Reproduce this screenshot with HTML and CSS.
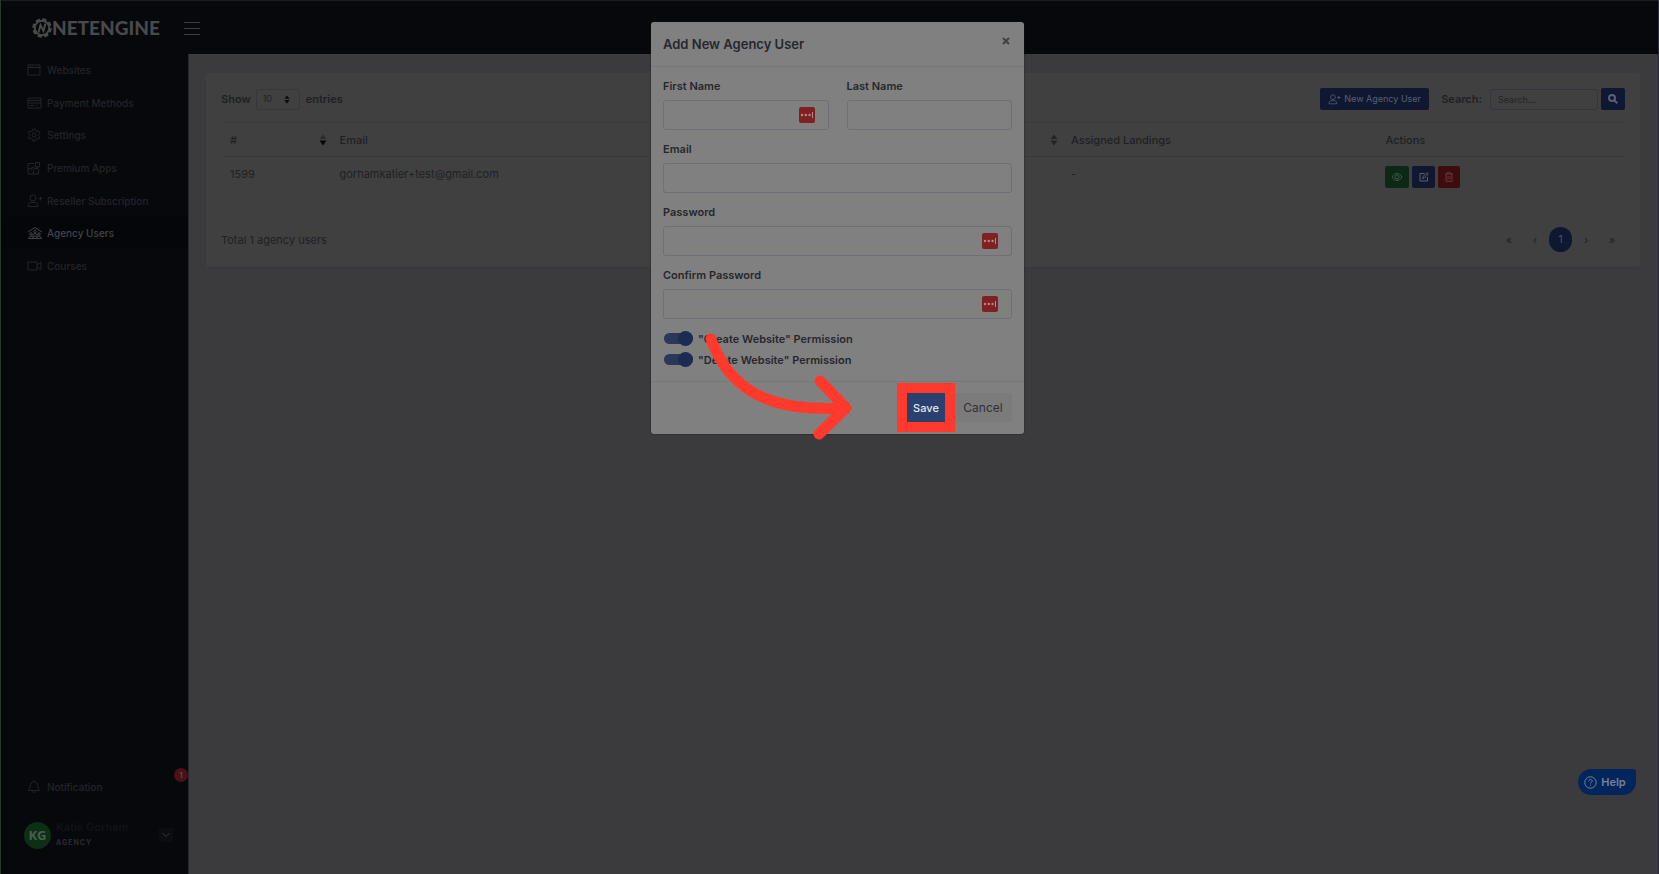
FILE: index.html
```html
<!DOCTYPE html>
<html lang="en">

<head>
    <meta charset="UTF-8">
    <meta name="viewport" content="width=device-width, initial-scale=1.0">
    <title>Agency Users</title>
    <link rel="stylesheet" href="styles.css">
</head>

<body>
    <svg class="sprite" width="0" height="0">
        <symbol id="user-plus" viewBox="0 0 16 14">
            <circle cx="6" cy="4" r="3" />
            <path d="M1 12.500c0-3 1.500-4 3-4h4c1.500 0 3 1 3 4zM13.500 2.500v4M11.500 4.500h4" />
        </symbol>
        <symbol id="sort" viewBox="0 0 8 12">
            <path class="up" d="M4 0.500L7.500 5H0.500z" />
            <path d="M4 11.500L7.500 6.500H0.500z" />
        </symbol>
        <symbol id="vault" viewBox="0 0 16 16">
            <circle cx="3" cy="8" r="1.200" />
            <circle cx="6.800" cy="8" r="1.200" />
            <circle cx="10.600" cy="8" r="1.200" />
            <rect x="13" y="5" width="1" height="6" />
        </symbol>
    </svg>

    <header class="topbar">
        <a class="brand" href="#">
            <svg width="20" height="20" viewBox="0 0 20 20">
                <circle cx="10" cy="10" r="7.200" fill="none" stroke="currentColor" stroke-width="2" />
                <circle cx="10" cy="10" r="8.500" fill="none" stroke="currentColor" stroke-width="2.600" stroke-dasharray="4.200 2.475" />
                <path d="M6.500 14.500L8.500 7L11.500 13L13.500 5.500" fill="none" stroke="currentColor" stroke-width="2" />
            </svg>
            <span>NETENGINE</span>
        </a>
        <button class="menu-toggle" type="button" aria-label="Toggle menu"><i></i><i></i><i></i></button>
    </header>

    <div class="layout">
        <aside class="sidebar">
            <nav class="nav">
                <a href="#">
                    <svg viewBox="0 0 16 14"><path d="M1 2h12v10H1zM1 4.500h12M3 3.200h1M5 3.200h1" /></svg>
                    Websites
                </a>
                <a href="#">
                    <svg viewBox="0 0 16 14"><path d="M1 2h13v10H1zM1 4.500h13M1 7h13M3 9.500h4M9 9.500h1" /></svg>
                    Payment Methods
                </a>
                <a href="#">
                    <svg viewBox="0 0 16 14"><path d="M5.800 1h2.400l.4 1.800 1.300.7 1.800-.6 1.200 2-1.400 1.300v1.600l1.400 1.300-1.200 2-1.800-.6-1.300.7-.4 1.800H5.800l-.4-1.800-1.300-.7-1.800.6-1.200-2 1.400-1.300V6.200L1.100 4.900l1.200-2 1.800.6 1.300-.7z" /><circle cx="7" cy="7" r="2" /></svg>
                    Settings
                </a>
                <a href="#">
                    <svg viewBox="0 0 16 14"><path d="M7 2.500H1v10.500h10.500V8M1 7.500h3.500a1.500 1.500 0 1 1 3 0h3M6.500 13v-2.500a1.500 1.500 0 1 0-2.500-1" /><path d="M8.500 1.500h4v4.500h-4zM10.500 6v2" /></svg>
                    Premium Apps
                </a>
                <a href="#">
                    <svg><use href="#user-plus" /></svg>
                    Reseller Subscription
                </a>
                <a class="active" href="#">
                    <svg viewBox="0 0 16 14"><path d="M1 6L8 1.500L15 6" /><circle cx="8" cy="5.500" r="1.300" /><circle cx="4" cy="8" r="1.200" /><circle cx="12" cy="8" r="1.200" /><path d="M6 10V8.500l2-1 2 1V10M1.500 12.500c0-3 5-3 5 0zM5.500 12.500c0-3 5-3 5 0zM9.500 12.500c0-3 5-3 5 0z" /></svg>
                    Agency Users
                </a>
                <a href="#">
                    <svg viewBox="0 0 16 14"><path d="M1 3h9v8H1zM10 6l4-2.500v7L10 8" /></svg>
                    Courses
                </a>
            </nav>

            <div class="sidebar-bottom">
                <a class="notification" href="#">
                    <svg viewBox="0 0 16 14"><path d="M1.500 10.500C4 8.500 2.500 5 4.200 3 5.500 1.300 8.500 1.300 9.800 3c1.700 2 .2 5.500 2.700 7.500zM5.500 11c.4 2 2.600 2 3 0M7 1.500V.5" /></svg>
                    Notification
                    <span class="badge">1</span>
                </a>
                <div class="account">
                    <span class="avatar">KG</span>
                    <div class="account-text">
                        <div class="account-name">Katie Gorham</div>
                        <div class="account-role">AGENCY</div>
                    </div>
                    <button class="account-toggle" type="button" aria-label="Account menu">
                        <svg width="8" height="6" viewBox="0 0 8 6"><path d="M0.500 1L4 4.500L7.500 1" /></svg>
                    </button>
                </div>
            </div>
        </aside>

        <main class="content">
            <section class="card">
                <div class="toolbar">
                    <label for="length">Show</label>
                    <span class="select-wrap">
                        <select id="length">
                            <option>10</option>
                            <option>25</option>
                        </select>
                        <svg width="8" height="9" viewBox="0 0 8 12"><use href="#sort" width="8" height="12" /></svg>
                    </span>
                    <label for="length">entries</label>
                    <button class="btn btn-new" type="button"><svg width="13" height="11"><use href="#user-plus" /></svg>New Agency User</button>
                    <label for="search">Search:</label>
                    <input id="search" type="text" placeholder="Search...">
                    <button class="btn btn-search" type="button" aria-label="Search">
                        <svg width="10" height="10" viewBox="0 0 10 10"><circle cx="4" cy="4" r="3" /><path d="M6.200 6.200L9.300 9.300" /></svg>
                    </button>
                </div>

                <table>
                    <thead>
                        <tr>
                            <th class="col-id sorted">#<svg class="sort" width="8" height="12"><use href="#sort" /></svg></th>
                            <th class="col-email">Email<svg class="sort" width="8" height="12"><use href="#sort" /></svg></th>
                            <th class="col-landings">Assigned Landings</th>
                            <th>Actions</th>
                        </tr>
                    </thead>
                    <tbody>
                        <tr>
                            <td>1599</td>
                            <td>gorhamkatier+test@gmail.com</td>
                            <td>-</td>
                            <td class="actions">
                                <button class="btn view" type="button" aria-label="View"><svg width="12" height="10" viewBox="0 0 12 10"><path d="M1 5c3-4.700 7-4.700 10 0-3 4.700-7 4.700-10 0z" /><circle cx="6" cy="5" r="2" /></svg></button>
                                <button class="btn edit" type="button" aria-label="Edit"><svg width="10" height="10" viewBox="0 0 10 10"><path d="M5.500 1.500H1v7.500h7.500V5M3.500 6.500l.5-2L8 .7l1.300 1.300L5.300 6z" /></svg></button>
                                <button class="btn delete" type="button" aria-label="Delete"><svg width="10" height="10" viewBox="0 0 10 10"><path d="M1 2h8M3.500 2V.7h3V2M2 2v7.300h6V2M4 4v3.500M6 4v3.500" /></svg></button>
                            </td>
                        </tr>
                    </tbody>
                </table>

                <div class="table-footer">
                    <span>Total 1 agency users</span>
                    <nav class="pagination">
                        <a href="#">«</a>
                        <a href="#">‹</a>
                        <a class="current" href="#">1</a>
                        <a href="#">›</a>
                        <a href="#">»</a>
                    </nav>
                </div>
            </section>
        </main>
    </div>

    <button class="help" type="button">
        <svg width="13" height="13" viewBox="0 0 13 13"><circle cx="6.500" cy="6.500" r="5.700" /><path d="M4.800 5.200c0-2.300 3.500-2.200 3.400 0 0 1.200-1.700 1.200-1.700 2.300M6.500 8.700v1" /></svg>
        Help
    </button>

    <form class="modal" role="dialog" aria-labelledby="modal-title">
        <div class="modal-header">
            <h1 id="modal-title">Add New Agency User</h1>
            <button class="close" type="button" aria-label="Close">
                <svg width="8" height="8" viewBox="0 0 8 8"><path d="M1 1l6 6M7 1L1 7" /></svg>
            </button>
        </div>
        <div class="modal-body">
            <div class="field-row">
                <div class="field">
                    <label for="first-name">First Name</label>
                    <input id="first-name" type="text">
                    <svg class="vault"><use href="#vault" /></svg>
                </div>
                <div class="field">
                    <label for="last-name">Last Name</label>
                    <input id="last-name" type="text">
                </div>
            </div>
            <div class="field">
                <label for="email">Email</label>
                <input id="email" type="email">
            </div>
            <div class="field">
                <label for="password">Password</label>
                <input id="password" type="password">
                <svg class="vault"><use href="#vault" /></svg>
            </div>
            <div class="field">
                <label for="confirm">Confirm Password</label>
                <input id="confirm" type="password">
                <svg class="vault"><use href="#vault" /></svg>
            </div>
            <label class="switch"><input type="checkbox" checked>"Create Website" Permission</label>
            <label class="switch"><input type="checkbox" checked>"Delete Website" Permission</label>
        </div>
        <div class="modal-footer">
            <button class="save" type="submit">Save</button>
            <button class="cancel" type="button">Cancel</button>
        </div>
        <svg class="arrow" width="154" height="112" viewBox="0 0 154 112">
            <path d="M11 10C29 60 68 83 142 79M120 52L146 79L119 105" />
        </svg>
    </form>
</body>

</html>
```

FILE: styles.css
```css
* {
    box-sizing: border-box;
}

body {
    margin: 0;
    min-height: 100vh;
    display: flex;
    flex-direction: column;
    font-family: Inter, "Open Sans", sans-serif;
    font-size: 11px;
    line-height: 16px;
    color: #1f2023;
    background: #3b3b3d;
    border-left: 1px solid #263a29;
    border-right: 1px solid #2b2547;
}

a {
    color: inherit;
    text-decoration: none;
}

button,
input,
select {
    font: inherit;
    color: inherit;
}

button {
    padding: 0;
    border: 0;
    background: none;
}

svg {
    flex: none;
    fill: none;
    stroke: currentColor;
}

.sprite {
    position: absolute;
}

/* header */
.topbar {
    height: 54px;
    display: flex;
    align-items: center;
    gap: 24px;
    padding-left: 31px;
    background: #07080c;
    border-top: 1px solid #1c1d20;
}

.brand {
    display: flex;
    align-items: center;
    color: #48494b;
    font-family: Lato, sans-serif;
    font-size: 19px;
    font-weight: 900;
    line-height: 20px;
}

.brand svg {
    stroke: none;
}

.menu-toggle {
    width: 16px;
    display: grid;
    gap: 5px;
    padding-top: 2px;
}

.menu-toggle i {
    height: 1px;
    background: #3c3d40;
}

/* sidebar */
.layout {
    flex: 1;
    display: flex;
}

.sidebar {
    width: 187px;
    display: flex;
    flex-direction: column;
    justify-content: space-between;
    background: #07080c;
    color: #222428;
    font-size: 10px;
    font-weight: 500;
}

.nav {
    height: 228px;
    display: grid;
    grid-auto-rows: 1fr;
}

.nav a,
.notification {
    display: flex;
    align-items: center;
    gap: 4px;
    padding-left: 26px;
}

.nav svg,
.notification svg {
    width: 16px;
    height: 14px;
}

.nav .active {
    color: #424346;
    background: #050609;
}

.notification {
    position: relative;
    height: 32px;
}

.badge {
    position: absolute;
    top: -3px;
    right: 0;
    width: 14px;
    height: 14px;
    border-radius: 50%;
    background: #4b1215;
    color: #6b5052;
    font-size: 8px;
    line-height: 14px;
    text-align: center;
}

.account {
    display: flex;
    align-items: center;
    gap: 5px;
    padding: 16px 15px 23px 23px;
}

.avatar {
    width: 27px;
    height: 27px;
    border-radius: 50%;
    background: #0d2f16;
    color: #4c5c4f;
    font-family: "Open Sans", sans-serif;
    font-size: 13px;
    font-weight: 700;
    line-height: 27px;
    text-align: center;
}

.account-text {
    flex: 1;
}

.account-name {
    color: #111215;
    font-size: 11px;
    font-weight: 600;
}

.account-role {
    color: #2b2c2f;
    font-size: 7px;
    font-weight: 700;
    letter-spacing: 1px;
}

.account-toggle {
    width: 14px;
    height: 14px;
    display: grid;
    place-items: center;
    background: #0c0d10;
    color: #35363a;
}

/* agency users card */
.content {
    flex: 1;
    padding: 19px 18px 19px 17px;
    border-left: 1px solid #29292c;
}

.card {
    height: 194px;
    padding: 15px;
    background: #404040;
    border-radius: 3px;
}

.toolbar {
    display: flex;
    align-items: center;
    height: 22px;
    font-weight: 600;
}

.select-wrap {
    position: relative;
    margin: 0 6px 0 5px;
}

.select-wrap select {
    display: block;
    width: 44px;
    height: 21px;
    padding: 0 6px;
    appearance: none;
    background: transparent;
    border: 1px solid #37373a;
    border-radius: 3px;
    font-size: 9px;
    font-weight: 400;
}

.select-wrap svg {
    position: absolute;
    top: 6px;
    right: 9px;
    fill: #0b0b0c;
    stroke: none;
}

.btn {
    display: flex;
    align-items: center;
    justify-content: center;
    height: 22px;
    border-radius: 2px;
    color: #5a6070;
    background: #0f1830;
    font-weight: 400;
}

.btn-new {
    width: 109px;
    margin: 0 12px 0 auto;
    gap: 3px;
    font-size: 9px;
}

#search {
    width: 108px;
    height: 21px;
    margin: 0 3px 0 8px;
    padding: 0 7px;
    background: transparent;
    border: 1px solid #34353c;
    border-radius: 3px;
    font-size: 9px;
    font-weight: 400;
}

#search::placeholder {
    color: #242528;
}

.btn-search {
    width: 24px;
}

.btn-search svg {
    stroke-width: 2;
}

table {
    width: 100%;
    margin-top: 12px;
    table-layout: fixed;
    border-collapse: collapse;
}

th,
td {
    height: 34px;
    padding: 0 9px;
    text-align: left;
    font-weight: 400;
}

th {
    font-weight: 500;
    border-top: 1px solid #3a3a3b;
    border-bottom: 1px solid #3a3a3b;
}

.col-id {
    width: 7.8%;
}

.col-email {
    width: 52.1%;
}

.col-landings {
    width: 22.4%;
}

.sort {
    float: right;
    margin: 2px -5px 0 0;
    fill: #242424;
    stroke: none;
}

.sorted .sort {
    --up: #2b2b2b;
    fill: #060606;
}

.up {
    fill: var(--up, inherit);
}

td.actions {
    display: flex;
    gap: 3px;
    padding-top: 9px;
}

.actions .btn {
    width: 23px;
}

.actions .view {
    width: 24px;
    color: #3f5646;
    background: #0c2916;
}

.actions .delete {
    width: 22px;
    color: #6b3638;
    background: #3d0c0f;
}

.table-footer {
    display: flex;
    align-items: center;
    justify-content: space-between;
    margin-top: 36px;
}

.pagination {
    display: flex;
    align-items: center;
}

.pagination a {
    width: 26px;
    text-align: center;
}

.pagination .current {
    width: 23px;
    height: 25px;
    margin: 0 1px;
    border-radius: 12px;
    background: #0f1830;
    color: #4a5060;
    line-height: 25px;
}

/* help launcher */
.help {
    position: fixed;
    right: 23px;
    bottom: 79px;
    display: flex;
    align-items: center;
    justify-content: center;
    gap: 4px;
    width: 58px;
    height: 26px;
    padding-right: 4px;
    border-radius: 13px 3px 13px 13px;
    background: #02265c;
    color: #74829a;
    font-weight: 600;
}

/* modal */
.modal {
    position: absolute;
    top: 22px;
    left: 0;
    right: 0;
    width: 373px;
    margin: 0 auto;
    padding: 0;
    translate: 8px;
    background: #808080;
    border-radius: 3px;
    box-shadow: 0 0 2px #1c1c1e;
    color: #26272d;
}

.modal-header {
    display: flex;
    align-items: flex-start;
    justify-content: space-between;
    height: 45px;
    padding: 12px 14px 0 12px;
    border-bottom: 1px solid #78787a;
}

.modal h1 {
    margin: 0;
    font-size: 13px;
    font-weight: 600;
    line-height: 20px;
}

.close {
    padding-top: 3px;
    line-height: 0;
    color: #404144;
}

.close svg {
    stroke-width: 2;
}

.modal-body {
    padding: 9px 12px 11px;
    font-weight: 600;
}

.field-row {
    display: grid;
    grid-template-columns: 1fr 1fr;
    gap: 18px;
}

.field {
    position: relative;
    padding-bottom: 9px;
}

.field label {
    display: block;
    height: 24px;
    line-height: 20px;
}

.field input {
    display: block;
    width: 100%;
    height: 30px;
    padding: 0 10px;
    background: transparent;
    border: 1px solid #6e6f77;
    border-radius: 3px;
}

.vault {
    position: absolute;
    top: 31px;
    right: 14px;
    width: 16px;
    height: 16px;
    border-radius: 2px;
    background: #7f2022;
    color: #b08a8b;
    fill: currentColor;
    stroke: none;
}

.switch {
    display: flex;
    align-items: center;
    gap: 5px;
    height: 21px;
}

.switch input {
    position: relative;
    appearance: none;
    width: 29px;
    height: 11px;
    margin: 0 0 0 1px;
    border-radius: 6px;
    background: #293859;
}

.switch input::after {
    content: "";
    position: absolute;
    top: -2px;
    right: 0;
    width: 15px;
    height: 15px;
    border-radius: 50%;
    background: #1b2b52;
}

.modal-footer {
    display: flex;
    justify-content: flex-end;
    padding: 11px 12px 12px;
    border-top: 1px solid #78787a;
}

.modal-footer button {
    height: 29px;
}

.save {
    z-index: 1;
    width: 38px;
    margin-right: 9px;
    outline: 10px solid #ff3a2d;
    background: #2a406e;
    color: #e6e9f0;
    font-weight: 500;
}

.modal-footer .cancel {
    width: 58px;
    background: #7b7b7c;
    border-radius: 3px;
    color: #2f3034;
    font-size: 12px;
}

.arrow {
    position: absolute;
    left: 49px;
    top: 307px;
    stroke: #ff3a2d;
    stroke-width: 11;
    stroke-linecap: round;
    stroke-linejoin: round;
}
```
